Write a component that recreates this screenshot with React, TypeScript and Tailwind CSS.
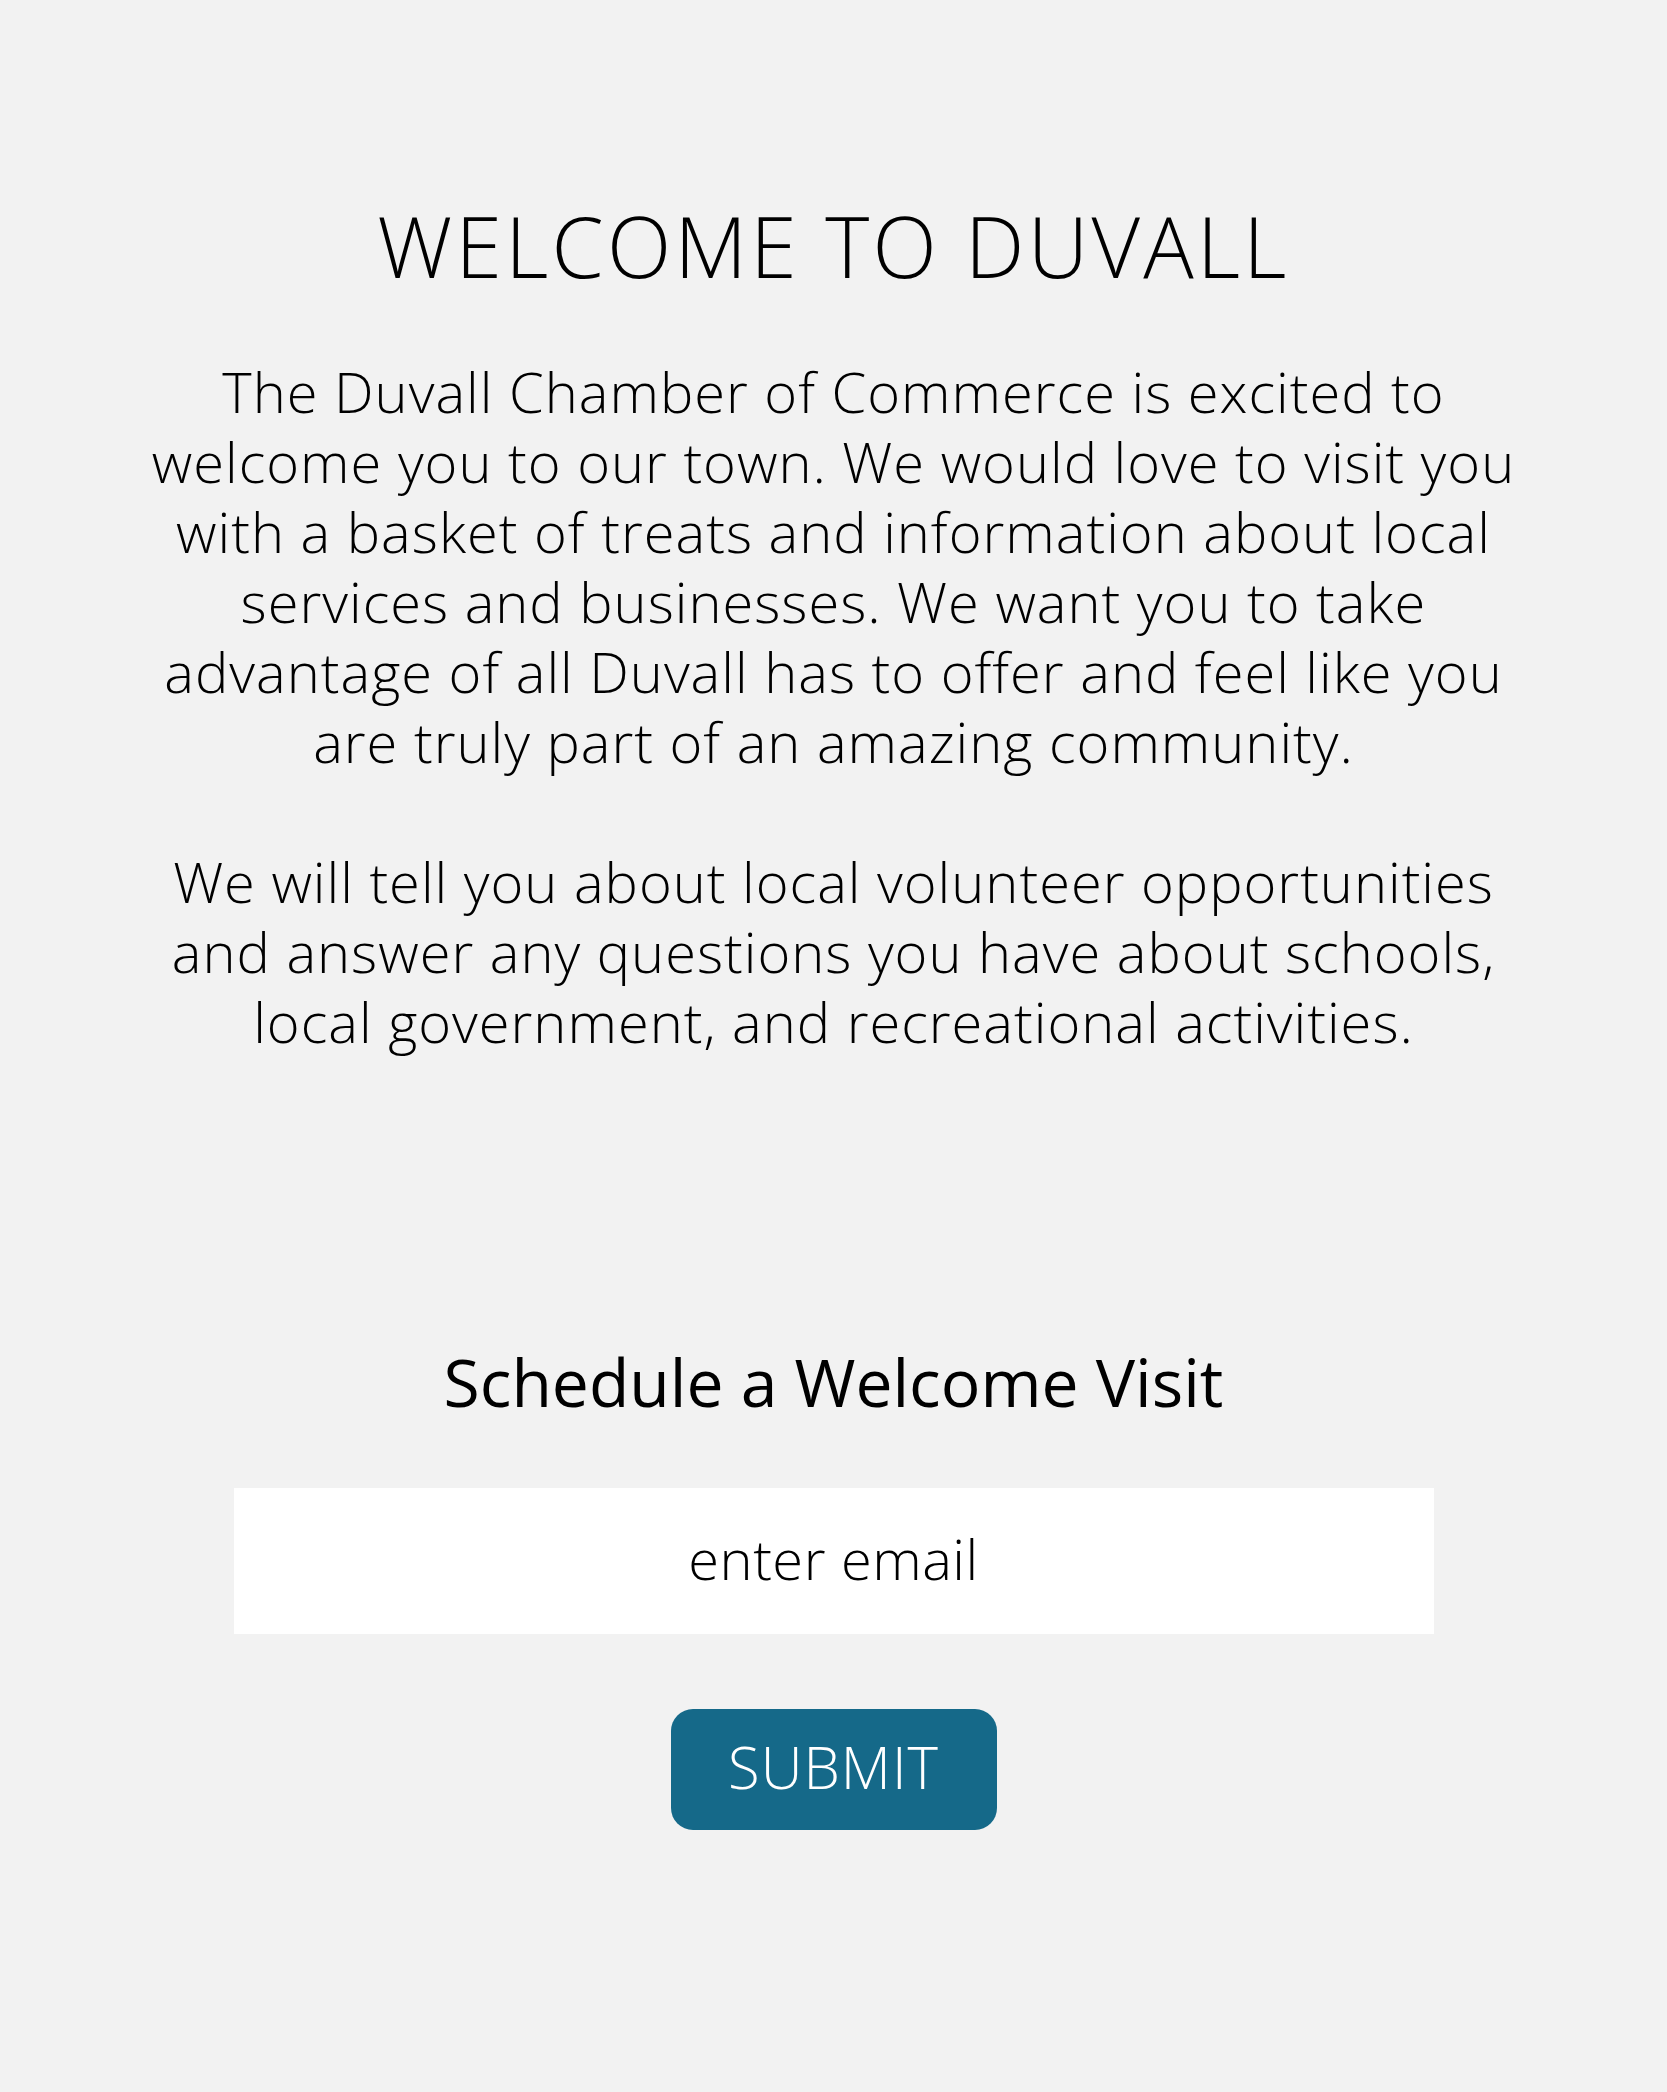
export default function App() {
  return (
    <div className="min-h-screen w-full bg-[#f2f2f2] flex flex-col items-center text-black font-['Open_Sans',sans-serif]">
      <h1 className="mt-[196px] text-[84px] leading-[100px] font-light tracking-[3.3px]">WELCOME TO DUVALL</h1>

      <div className="mt-[60px] w-[1500px] text-center text-[56px] leading-[70px] font-light tracking-[1px]">
        <p>
          The Duvall Chamber of Commerce is excited to
          <br />
          welcome you to our town. We would love to visit you
          <br />
          with a basket of treats and information about local
          <br />
          services and businesses. We want you to take
          <br />
          advantage of all Duvall has to offer and feel like you
          <br />
          are truly part of an amazing community.
        </p>
        <p className="mt-[70px]">
          We will tell you about local volunteer opportunities
          <br />
          and answer any questions you have about schools,
          <br />
          local government, and recreational activities.
        </p>
      </div>

      <h2 className="mt-[285px] text-[66px] leading-[80px] font-normal">Schedule a Welcome Visit</h2>

      <input
        type="email"
        placeholder="enter email"
        className="mt-[67px] w-[1200px] h-[146px] pb-[6px] bg-white text-center text-[56px] font-light tracking-[0.5px] outline-none placeholder:text-black"
      />

      <button className="mt-[75px] w-[326px] h-[121px] pb-[6px] rounded-[22px] bg-[#156989] text-white text-[58px] font-light tracking-[1px]">
        SUBMIT
      </button>
    </div>
  );
}
